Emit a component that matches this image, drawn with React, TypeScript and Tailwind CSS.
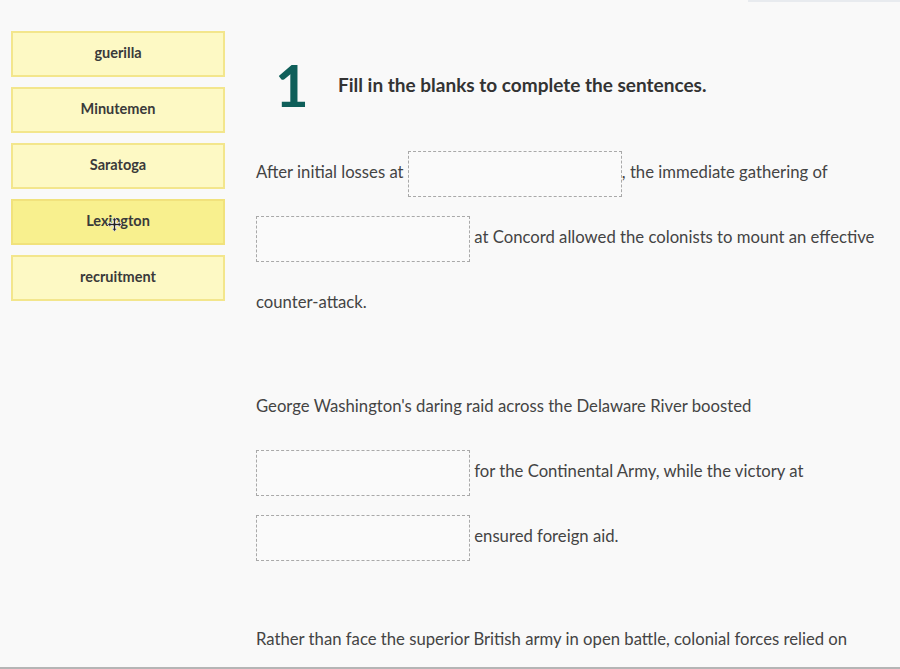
import React from 'react';

const words = ['guerilla', 'Minutemen', 'Saratoga', 'Lexington', 'recruitment'];

function Blank() {
  return (
    <span className="inline-block w-[214px] h-[46px] align-middle border border-dashed border-[#a9a9a9] bg-[#fafafa]" />
  );
}

function MoveCursor() {
  return (
    <svg
      className="absolute left-[106px] top-[216px] pointer-events-none"
      width="17"
      height="17"
      viewBox="0 0 17 17"
    >
      <path
        d="M8.5 1.5 L11 4.5 H9.6 V7.4 H12.5 V6 L15.5 8.5 L12.5 11 V9.6 H9.6 V12.5 H11 L8.5 15.5 L6 12.5 H7.4 V9.6 H4.5 V11 L1.5 8.5 L4.5 6 V7.4 H7.4 V4.5 H6 Z"
        fill="#222"
        stroke="#ddd"
        strokeWidth="1"
      />
    </svg>
  );
}

export default function App() {
  return (
    <div
      className="relative w-[900px] h-[669px] overflow-hidden bg-[#f9f9f9] text-[#444]"
      style={{ fontFamily: 'Lato, "Open Sans", sans-serif' }}
    >
      <div className="absolute right-0 top-0 w-[152px] h-[2px] bg-[#e8ebef]" />
      <div className="flex h-[667px]">
        <aside className="w-[240px] shrink-0 flex flex-col gap-[10px] pl-[11px] pt-[31px]">
          {words.map((w) => (
            <div
              key={w}
              className={`w-[214px] h-[46px] flex items-center justify-center border-2 text-[14.5px] font-bold text-[#3a3a3a] pb-[2px] ${
                w === 'Lexington'
                  ? 'bg-[#f8f08e] border-[#f1e27c]'
                  : 'bg-[#fdf9c4] border-[#f3e68c]'
              }`}
            >
              {w}
            </div>
          ))}
        </aside>

        <main className="flex-1 pl-[16px] pt-[55px]">
          <div className="flex items-center h-[60px]">
            <span className="w-[82px] pl-[19px] text-[58px] font-bold leading-none text-[#0f5f5a]">
              1
            </span>
            <span className="text-[19px] font-bold text-[#333]">
              Fill in the blanks to complete the sentences.
            </span>
          </div>

          <div className="mt-[25px] text-[16.7px] leading-[65px] pr-[10px]">
            <p className="mb-[39px]">
              After initial losses at <Blank />, the immediate gathering of
              <br />
              <Blank /> at Concord allowed the colonists to mount an effective
              <br />
              counter-attack.
            </p>
            <p className="mb-[38px]">
              George Washington's daring raid across the Delaware River boosted
              <br />
              <Blank /> for the Continental Army, while the victory at
              <br />
              <Blank /> ensured foreign aid.
            </p>
            <p className="whitespace-nowrap">
              Rather than face the superior British army in open battle, colonial forces relied on
            </p>
          </div>
        </main>
      </div>
      <div className="h-[2px] bg-[#b5b5b5]" />
      <MoveCursor />
    </div>
  );
}
